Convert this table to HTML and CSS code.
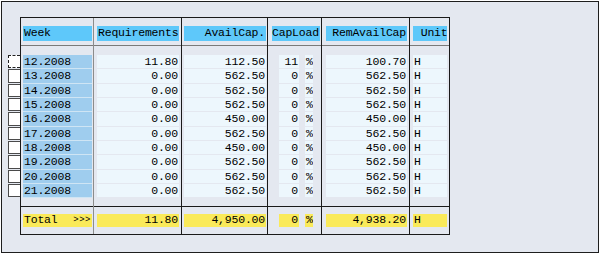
FILE: index.html
```html
<!DOCTYPE html>
<html>
<head>
<meta charset="utf-8">
<link rel="stylesheet" href="styles.css">
</head>
<body>
<div class="frame">
  <div class="area">
    <div class="selectors">
      <div class="sel focus"></div>
      <div class="sel"></div>
      <div class="sel"></div>
      <div class="sel"></div>
      <div class="sel"></div>
      <div class="sel"></div>
      <div class="sel"></div>
      <div class="sel"></div>
      <div class="sel"></div>
      <div class="sel"></div>
    </div>
    <div class="tbl">
      <div class="col c-week">
        <div class="hd"><div class="hcell">Week</div></div>
        <div class="body">
          <div class="cell wk">12.2008</div>
          <div class="cell wk">13.2008</div>
          <div class="cell wk">14.2008</div>
          <div class="cell wk">15.2008</div>
          <div class="cell wk">16.2008</div>
          <div class="cell wk">17.2008</div>
          <div class="cell wk">18.2008</div>
          <div class="cell wk">19.2008</div>
          <div class="cell wk">20.2008</div>
          <div class="cell wk">21.2008</div>
        </div>
        <div class="ft"><div class="tcell total"><span>Total</span><span class="arr">&gt;&gt;&gt;</span></div></div>
      </div>
      <div class="col c-req">
        <div class="hd"><div class="hcell">Requirements</div></div>
        <div class="body">
          <div class="cell num">11.80</div>
          <div class="cell num">0.00</div>
          <div class="cell num">0.00</div>
          <div class="cell num">0.00</div>
          <div class="cell num">0.00</div>
          <div class="cell num">0.00</div>
          <div class="cell num">0.00</div>
          <div class="cell num">0.00</div>
          <div class="cell num">0.00</div>
          <div class="cell num">0.00</div>
        </div>
        <div class="ft"><div class="tcell num">11.80</div></div>
      </div>
      <div class="col c-avail">
        <div class="hd"><div class="hcell num">AvailCap.</div></div>
        <div class="body">
          <div class="cell num">112.50</div>
          <div class="cell num">562.50</div>
          <div class="cell num">562.50</div>
          <div class="cell num">562.50</div>
          <div class="cell num">450.00</div>
          <div class="cell num">562.50</div>
          <div class="cell num">450.00</div>
          <div class="cell num">562.50</div>
          <div class="cell num">562.50</div>
          <div class="cell num">562.50</div>
        </div>
        <div class="ft"><div class="tcell num">4,950.00</div></div>
      </div>
      <div class="col c-cap">
        <div class="hd"><div class="hcell">CapLoad</div></div>
        <div class="body">
          <div class="pair"><div class="cell num load">11</div><div class="cell pct">%</div></div>
          <div class="pair"><div class="cell num load">0</div><div class="cell pct">%</div></div>
          <div class="pair"><div class="cell num load">0</div><div class="cell pct">%</div></div>
          <div class="pair"><div class="cell num load">0</div><div class="cell pct">%</div></div>
          <div class="pair"><div class="cell num load">0</div><div class="cell pct">%</div></div>
          <div class="pair"><div class="cell num load">0</div><div class="cell pct">%</div></div>
          <div class="pair"><div class="cell num load">0</div><div class="cell pct">%</div></div>
          <div class="pair"><div class="cell num load">0</div><div class="cell pct">%</div></div>
          <div class="pair"><div class="cell num load">0</div><div class="cell pct">%</div></div>
          <div class="pair"><div class="cell num load">0</div><div class="cell pct">%</div></div>
        </div>
        <div class="ft"><div class="tpair"><div class="tcell num load">0</div><div class="tcell pct">%</div></div></div>
      </div>
      <div class="col c-rem">
        <div class="hd"><div class="hcell num">RemAvailCap</div></div>
        <div class="body">
          <div class="cell num">100.70</div>
          <div class="cell num">562.50</div>
          <div class="cell num">562.50</div>
          <div class="cell num">562.50</div>
          <div class="cell num">450.00</div>
          <div class="cell num">562.50</div>
          <div class="cell num">450.00</div>
          <div class="cell num">562.50</div>
          <div class="cell num">562.50</div>
          <div class="cell num">562.50</div>
        </div>
        <div class="ft"><div class="tcell num">4,938.20</div></div>
      </div>
      <div class="col c-unit last">
        <div class="hd"><div class="hcell">&nbsp;Unit</div></div>
        <div class="body">
          <div class="cell">H</div>
          <div class="cell">H</div>
          <div class="cell">H</div>
          <div class="cell">H</div>
          <div class="cell">H</div>
          <div class="cell">H</div>
          <div class="cell">H</div>
          <div class="cell">H</div>
          <div class="cell">H</div>
          <div class="cell">H</div>
        </div>
        <div class="ft"><div class="tcell">H</div></div>
      </div>
    </div>
  </div>
</div>
</body>
</html>
```

FILE: styles.css
```css
html, body {
  margin: 0;
  padding: 0;
  background: #ffffff;
}

body {
  font-family: "Liberation Mono", "DejaVu Sans Mono", monospace;
  font-size: 11.5px;
  letter-spacing: -0.2px;
  color: #000;
}

.frame {
  box-sizing: border-box;
  margin: 1px 0 0 1px;
  width: 598px;
  height: 252px;
  border: 1px solid #1e1e1e;
  background: #e4e8f0;
}

.area {
  display: flex;
  align-items: flex-start;
  padding: 15px 0 0 6px;
}

.selectors {
  display: flex;
  flex-direction: column;
  padding-top: 38px;
  width: 12px;
}

.sel {
  box-sizing: border-box;
  width: 12px;
  height: 13.33px;
  margin-bottom: 1px;
  background: #ffffff;
  border: 1px solid #4a4a4a;
  border-right: none;
}

.sel.focus {
  border: 1px dashed #222;
  border-right: none;
}

.tbl {
  display: flex;
  border: 1px solid #1a1a1a;
}

.col {
  display: flex;
  flex-direction: column;
  border-right: 1px solid #1a1a1a;
}

.col.last {
  border-right: none;
}

.c-week { width: 72px; border-right-color: #8c8c8c; }
.c-req { width: 87px; }
.c-avail { width: 85px; }
.c-cap { width: 53px; }
.c-rem { width: 87px; }
.c-unit { width: 39px; }

.hd {
  box-sizing: border-box;
  height: 28px;
  padding-top: 8px;
  border-bottom: 1px solid #7a7a7a;
}

.body {
  box-sizing: border-box;
  height: 161px;
  padding-top: 9px;
  border-bottom: 1px solid #1a1a1a;
}

.ft {
  box-sizing: border-box;
  height: 27px;
  padding-top: 7px;
}

.hcell, .cell, .tcell {
  box-sizing: border-box;
  white-space: pre;
  overflow: hidden;
  padding: 0 1px;
}

.hcell {
  height: 14.5px;
  line-height: 14.5px;
  background: #5ec8fa;
}

.cell {
  height: 13.33px;
  line-height: 13.33px;
  margin-bottom: 1px;
  background: #edf7fd;
}

.cell.wk {
  background: #9fcdee;
  margin-bottom: 0;
  border-bottom: 1px solid #cfe5f4;
  height: 14.33px;
}

.tcell {
  height: 12.5px;
  line-height: 12.5px;
  background: #faea5a;
}

.num {
  text-align: right;
}

.c-week .hcell, .c-week .cell, .c-week .tcell { margin-left: 2px; margin-right: 1px; }
.c-req .hcell, .c-req .cell, .c-req .tcell { margin-left: 3px; margin-right: 2px; }
.c-avail .hcell, .c-avail .cell, .c-avail .tcell { margin-left: 2px; margin-right: 1px; }
.c-rem .hcell, .c-rem .cell, .c-rem .tcell { margin-left: 4px; margin-right: 2px; }
.c-unit .hcell, .c-unit .cell, .c-unit .tcell { margin-left: 3px; margin-right: 2px; }
.c-cap .hcell { margin-left: 4px; margin-right: 1px; padding: 0; }

.pair, .tpair {
  display: flex;
  margin-left: 11px;
}

.cell.load, .tcell.load {
  width: 20px;
  padding-right: 1px;
}

.cell.pct, .tcell.pct {
  width: 8px;
  margin-left: 6px;
  padding: 0 0 0 1px;
}

.total {
  display: flex;
  justify-content: space-between;
}

.arr {
  font-size: 9px;
  letter-spacing: 0.5px;
}
```
